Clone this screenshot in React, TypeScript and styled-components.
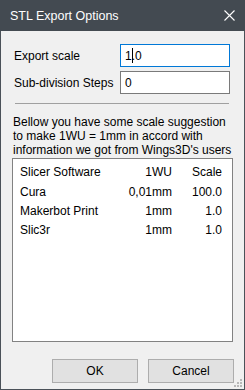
import React from "react";
import styled, { createGlobalStyle } from "styled-components";

const Global = createGlobalStyle`
  html, body { margin: 0; padding: 0; background: #f0f0f0; }
  body { font-family: "Liberation Sans", Arial, sans-serif; font-size: 12px; color: #000; }
  * { box-sizing: border-box; }
`;

const Window = styled.div`
  position: relative;
  width: 245px;
  height: 390px;
  border: 1px solid #4a5158;
  border-top: none;
  background: #f0f0f0;
  display: flex;
  flex-direction: column;
`;

const TitleBar = styled.div`
  height: 31px;
  margin: 0 -1px;
  background: #434a51;
  color: #fff;
  display: flex;
  align-items: center;
  justify-content: space-between;
  padding: 0 10px 0 10px;
  font-size: 12.5px;
  flex-shrink: 0;
`;

const Body = styled.div`
  flex: 1;
  display: flex;
  flex-direction: column;
  padding: 13px 11px 6px 11px;
`;

const FormGrid = styled.div`
  display: grid;
  grid-template-columns: 106px 110px;
  row-gap: 4px;
  align-items: center;
  padding-left: 2px;
`;

const Label = styled.div`
  line-height: 14px;
`;

const Input = styled.div<{ $focused?: boolean }>`
  height: 23px;
  border: 1px solid ${(p) => (p.$focused ? "#0078d7" : "#7a7a7a")};
  background: #fff;
  display: flex;
  align-items: center;
  padding-left: 4px;
  line-height: 14px;
`;

const Caret = styled.span`
  display: inline-block;
  width: 1px;
  height: 15px;
  background: #000;
  margin-right: -1px;
  vertical-align: middle;
`;

const Separator = styled.div`
  height: 1px;
  background: #a0a0a0;
  margin: 9px 4px 0 3px;
`;

const Paragraph = styled.div`
  margin-top: 11px;
  line-height: 14px;
  padding-left: 1px;
  white-space: nowrap;
`;

const ListBox = styled.div`
  margin-top: 1px;
  height: 184px;
  border: 1px solid #828282;
  background: #fff;
  padding-top: 3px;
`;

const Row = styled.div<{ $header?: boolean }>`
  display: grid;
  grid-template-columns: 104px 48px 50px;
  height: ${(p) => (p.$header ? "21px" : "19px")};
  line-height: ${(p) => (p.$header ? "21px" : "19px")};
  padding-left: 7px;
`;

const Cell = styled.div<{ $right?: boolean }>`
  text-align: ${(p) => (p.$right ? "right" : "left")};
  white-space: nowrap;
`;

const ButtonRow = styled.div`
  margin-top: auto;
  display: flex;
  justify-content: flex-end;
  gap: 10px;
  margin-right: -1px;
`;

const Button = styled.div`
  width: 86px;
  height: 24px;
  background: #e1e1e1;
  border: 1px solid #adadad;
  display: flex;
  align-items: center;
  justify-content: center;
`;

const Grip = styled.svg`
  position: absolute;
  right: 1px;
  bottom: 1px;
`;

const rows = [
  ["Cura", "0,01mm", "100.0"],
  ["Makerbot Print", "1mm", "1.0"],
  ["Slic3r", "1mm", "1.0"],
];

export default function App() {
  return (
    <>
      <Global />
      <Window>
        <TitleBar>
          <span>STL Export Options</span>
          <svg width="11" height="11" viewBox="0 0 11 11">
            <path d="M0.5 0.5 L10.5 10.5 M10.5 0.5 L0.5 10.5" stroke="#fff" strokeWidth="1.1" />
          </svg>
        </TitleBar>
        <Body>
          <FormGrid>
            <Label>Export scale</Label>
            <Input $focused>
              1<Caret />.0
            </Input>
            <Label>Sub-division Steps</Label>
            <Input>0</Input>
          </FormGrid>
          <Separator />
          <Paragraph>
            Bellow you have some scale suggestion
            <br />
            to make 1WU = 1mm in accord with
            <br />
            information we got from Wings3D's users
          </Paragraph>
          <ListBox>
            <Row $header>
              <Cell>Slicer Software</Cell>
              <Cell $right>1WU</Cell>
              <Cell $right>Scale</Cell>
            </Row>
            {rows.map((r) => (
              <Row key={r[0]}>
                <Cell>{r[0]}</Cell>
                <Cell $right>{r[1]}</Cell>
                <Cell $right>{r[2]}</Cell>
              </Row>
            ))}
          </ListBox>
          <ButtonRow>
            <Button>OK</Button>
            <Button>Cancel</Button>
          </ButtonRow>
        </Body>
        <Grip width="9" height="9" viewBox="0 0 9 9">
          <rect x="6" y="0" width="2" height="2" fill="#b8b8b8" />
          <rect x="3" y="3" width="2" height="2" fill="#b8b8b8" />
          <rect x="6" y="3" width="2" height="2" fill="#b8b8b8" />
          <rect x="0" y="6" width="2" height="2" fill="#b8b8b8" />
          <rect x="3" y="6" width="2" height="2" fill="#b8b8b8" />
          <rect x="6" y="6" width="2" height="2" fill="#b8b8b8" />
        </Grip>
      </Window>
    </>
  );
}
